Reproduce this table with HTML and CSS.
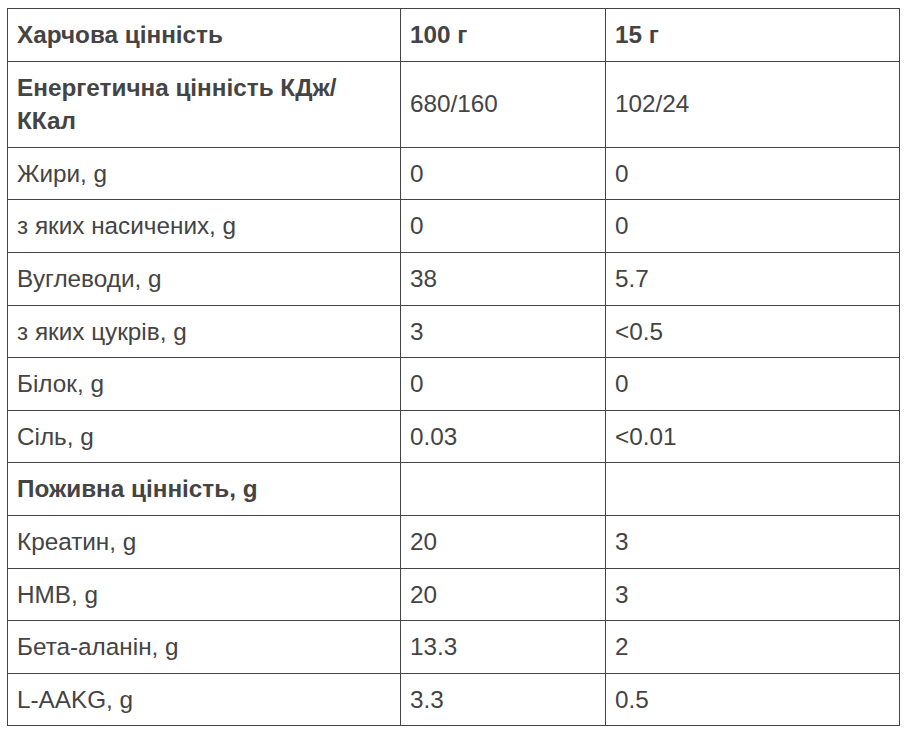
FILE: index.html
```html
<!DOCTYPE html>
<html lang="uk">
<head>
<meta charset="utf-8">
<link rel="stylesheet" href="styles.css">
</head>
<body>
<table class="nutrition">
  <colgroup>
    <col class="c1"><col class="c2"><col class="c3">
  </colgroup>
  <tr><td class="b">Харчова цінність</td><td class="b">100 г</td><td class="b">15 г</td></tr>
  <tr><td class="b">Енергетична цінність КДж/ККал</td><td>680/160</td><td>102/24</td></tr>
  <tr><td>Жири, g</td><td>0</td><td>0</td></tr>
  <tr><td>з яких насичених, g</td><td>0</td><td>0</td></tr>
  <tr><td>Вуглеводи, g</td><td>38</td><td>5.7</td></tr>
  <tr><td>з яких цукрів, g</td><td>3</td><td>&lt;0.5</td></tr>
  <tr><td>Білок, g</td><td>0</td><td>0</td></tr>
  <tr><td>Сіль, g</td><td>0.03</td><td>&lt;0.01</td></tr>
  <tr><td class="b">Поживна цінність, g</td><td></td><td></td></tr>
  <tr><td>Креатин, g</td><td>20</td><td>3</td></tr>
  <tr><td>HMB, g</td><td>20</td><td>3</td></tr>
  <tr><td>Бета-аланін, g</td><td>13.3</td><td>2</td></tr>
  <tr><td>L-AAKG, g</td><td>3.3</td><td>0.5</td></tr>
</table>
</body>
</html>
```
FILE: styles.css
```css
html, body {
  margin: 0;
  padding: 0;
  background: #fff;
}
body {
  padding: 8px 7px;
  font-family: "Liberation Sans", Arial, sans-serif;
  color: #444;
}
.nutrition {
  border-collapse: collapse;
  width: 892px;
  table-layout: fixed;
  font-size: 24.3px;
  line-height: 33.6px;
}
.c1 { width: 393px; }
.c2 { width: 205px; }
.c3 { width: 294px; }
.nutrition td {
  border: 1px solid #444;
  padding: 9px 24px 9px 9px;
  vertical-align: middle;
  text-align: left;
}
.nutrition td.b {
  font-weight: bold;
}
```
